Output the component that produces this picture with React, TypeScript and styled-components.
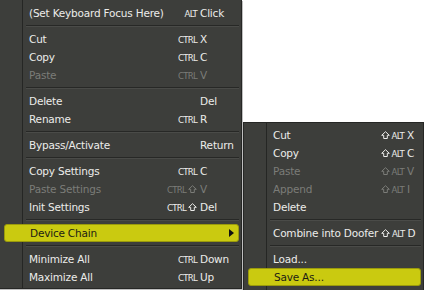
import React from 'react';
import styled, { createGlobalStyle } from 'styled-components';

type Entry =
    | { sep: true }
    | {
        sep?: false,
        label: string,
        mod?: string,
        shift?: boolean,
        hotkey?: string,
        disabled?: boolean,
        active?: boolean,
        arrow?: boolean,
    };

const mainItems: Array<Entry> = [
    { label: '(Set Keyboard Focus Here)', mod: 'ALT', hotkey: 'Click' },
    { sep: true },
    { label: 'Cut', mod: 'CTRL', hotkey: 'X' },
    { label: 'Copy', mod: 'CTRL', hotkey: 'C' },
    { label: 'Paste', mod: 'CTRL', hotkey: 'V', disabled: true },
    { sep: true },
    { label: 'Delete', hotkey: 'Del' },
    { label: 'Rename', mod: 'CTRL', hotkey: 'R' },
    { sep: true },
    { label: 'Bypass/Activate', hotkey: 'Return' },
    { sep: true },
    { label: 'Copy Settings', mod: 'CTRL', hotkey: 'C' },
    { label: 'Paste Settings', mod: 'CTRL', shift: true, hotkey: 'V', disabled: true },
    { label: 'Init Settings', mod: 'CTRL', shift: true, hotkey: 'Del' },
    { sep: true },
    { label: 'Device Chain', active: true, arrow: true },
    { sep: true },
    { label: 'Minimize All', mod: 'CTRL', hotkey: 'Down' },
    { label: 'Maximize All', mod: 'CTRL', hotkey: 'Up' },
];

const subItems: Array<Entry> = [
    { label: 'Cut', shift: true, mod: 'ALT', hotkey: 'X' },
    { label: 'Copy', shift: true, mod: 'ALT', hotkey: 'C' },
    { label: 'Paste', shift: true, mod: 'ALT', hotkey: 'V', disabled: true },
    { label: 'Append', shift: true, mod: 'ALT', hotkey: 'I', disabled: true },
    { label: 'Delete' },
    { sep: true },
    { label: 'Combine into Doofer', shift: true, mod: 'ALT', hotkey: 'D' },
    { sep: true },
    { label: 'Load...' },
    { label: 'Save As...', active: true },
];

const ShiftIcon = () => (
    <svg width="9" height="8" viewBox="0 0 9 8">
        <path d="M4.5 0.7 L8.3 4.3 H6.3 V7.5 H2.7 V4.3 H0.7 Z" fill="none" stroke="currentColor" strokeWidth="1" />
    </svg>
);

const SubArrow = () => (
    <svg width="5" height="8" viewBox="0 0 5 8">
        <path d="M0 0 L5 4 L0 8 Z" fill="#111" />
    </svg>
);

const MenuList = ({ items, keyWidth }: { items: Array<Entry>, keyWidth: number }) => <>
    {items.map((item, index) => item.sep
        ? <Separator key={index} />
        : <Row key={index} $keyWidth={keyWidth} $active={!!item.active} $disabled={!!item.disabled}>
            <span>{item.label}</span>
            <Mod>
                {item.mod && item.shift && item.mod === 'ALT' && <ShiftIcon />}
                {item.mod && <span>{item.mod}</span>}
                {item.mod && item.shift && item.mod !== 'ALT' && <ShiftIcon />}
            </Mod>
            <HotKey>{item.arrow ? <ArrowBox><SubArrow /></ArrowBox> : item.hotkey}</HotKey>
        </Row>)}
</>;

const App = () => {
    return <>
        <GlobalStyle />
        <Stage>
            <Menu $width={243} $main>
                <MenuList items={mainItems} keyWidth={41} />
            </Menu>
            <SubMenu $width={181}>
                <MenuList items={subItems} keyWidth={16} />
            </SubMenu>
        </Stage>
    </>;
}

export default App;

const GlobalStyle = createGlobalStyle`
    html, body {
        margin: 0;
        background: #ffffff;
    }
    body {
        font-family: "DejaVu Sans", "Liberation Sans", sans-serif;
    }
`

const Stage = styled.div`
    position: relative;
    width: 424px;
    height: 290px;
    overflow: hidden;
    background: #ffffff;
`

const Menu = styled.div<{ $width: number, $main?: boolean }>`
    box-sizing: border-box;
    width: ${p => p.$width}px;
    height: ${p => p.$main ? 289 : 172}px;
    margin-left: ${p => p.$main ? -1 : 0}px;
    padding: ${p => p.$main ? 4 : 3}px 0 2px;
    border: 1px solid #262725;
    border-top-width: ${p => p.$main ? 0 : 1}px;
    background:
        linear-gradient(to right, transparent 22px, #252624 22px, #252624 23px, transparent 23px),
        #3d3e3b;
    box-shadow: 1px 1px 0 rgba(0, 0, 0, 0.25);
    display: flex;
    flex-direction: column;
`

const SubMenu = styled(Menu)`
    position: absolute;
    left: 243px;
    top: 122px;
`

const Row = styled.div<{ $keyWidth: number, $active: boolean, $disabled: boolean }>`
    box-sizing: border-box;
    height: 18px;
    flex: 0 0 18px;
    display: grid;
    grid-template-columns: 1fr auto ${p => p.$keyWidth}px;
    column-gap: 3px;
    align-items: center;
    padding-left: ${p => p.$active ? 25 : 29}px;
    margin: 0 ${p => p.$active ? 2 : 0}px 0 ${p => p.$active ? 4 : 0}px;
    font-size: 10.5px;
    letter-spacing: -0.2px;
    white-space: nowrap;
    color: ${p => p.$active ? '#1c1c14' : p.$disabled ? '#7b7c78' : '#ececea'};
    background: ${p => p.$active ? '#caca10' : 'transparent'};
    border: ${p => p.$active ? '1px solid #9a9a0c' : 'none'};
    border-radius: 3px;
`

const Mod = styled.span`
    display: flex;
    align-items: center;
    justify-content: flex-end;
    gap: 2px;
    font-family: "DejaVu Sans Condensed", "Liberation Sans Narrow", sans-serif;
    font-size: 9.5px;
    letter-spacing: -0.7px;
    svg {
        display: block;
    }
`

const HotKey = styled.span`
    display: flex;
    align-items: center;
`

const ArrowBox = styled.span`
    display: flex;
    justify-content: flex-end;
    width: 100%;
    padding-right: 4px;
`

const Separator = styled.div`
    flex: 0 0 8px;
    height: 8px;
    margin: 0 2px 0 26px;
    background: linear-gradient(to bottom, transparent 3px, #272826 3px, #272826 4px, #4a4b48 4px, #4a4b48 5px, transparent 5px);
`
